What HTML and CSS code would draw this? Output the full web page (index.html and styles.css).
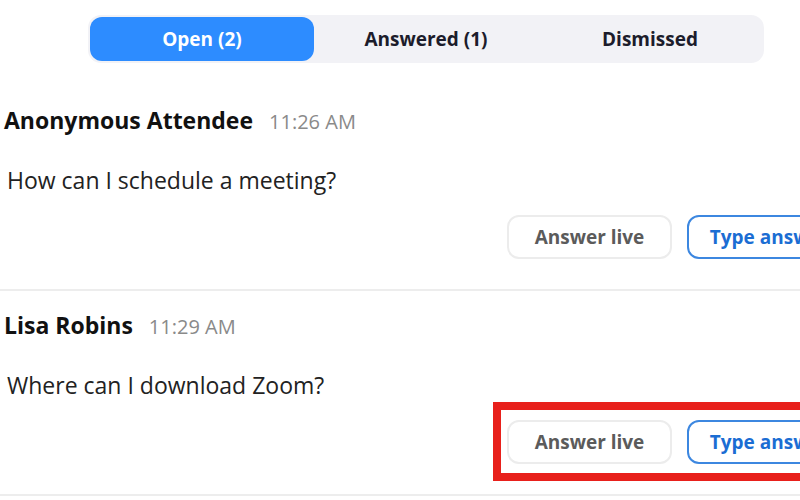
FILE: index.html
```html
<!DOCTYPE html>
<html lang="en">
<head>
    <meta charset="UTF-8">
    <meta name="viewport" content="width=device-width, initial-scale=1.0">
    <title>Q&amp;A</title>
    <link rel="stylesheet" href="styles.css">
</head>
<body>

    <div class="tabs">
        <div class="tab active">Open (2)</div>
        <div class="tab">Answered (1)</div>
        <div class="tab">Dismissed</div>
    </div>

    <div class="questions">
        <div class="question">
            <div class="asker">
                <span class="name">Anonymous Attendee</span>
                <span class="time">11:26 AM</span>
            </div>
            <div class="text">How can I schedule a meeting?</div>
            <div class="actions">
                <button class="btn btn-live">Answer live</button>
                <button class="btn btn-type">Type answer</button>
            </div>
        </div>

        <div class="question">
            <div class="asker">
                <span class="name">Lisa Robins</span>
                <span class="time">11:29 AM</span>
            </div>
            <div class="text">Where can I download Zoom?</div>
            <div class="actions">
                <button class="btn btn-live">Answer live</button>
                <button class="btn btn-type">Type answer</button>
                <!-- highlight drawn over the buttons -->
                <div class="highlight"></div>
            </div>
        </div>
    </div>

</body>
</html>
```

FILE: styles.css
```css
body {
    margin: 0;
    background-color: #fff;
    font-family: "Open Sans", Arial, sans-serif;
    overflow: hidden;
    width: 800px;
    height: 500px;
}
.tabs {
    display: flex;
    width: 672px;
    height: 44px;
    margin: 15px 0 23px 88px;
    padding: 2px;
    background-color: #f2f2f6;
    border-radius: 13px;
}
.tab {
    flex: 1;
    display: flex;
    align-items: center;
    justify-content: center;
    font-size: 19px;
    font-weight: 700;
    color: #1c1c2b;
    border-radius: 12px;
}
.tab.active {
    background-color: #2d8cff;
    color: #fff;
}
.questions {
    width: 870px;
}
.question {
    padding: 19px 0 30px 0;
    border-bottom: 2px solid #ededed;
}
.asker {
    display: flex;
    align-items: baseline;
    height: 30px;
    line-height: 30px;
    padding-left: 4px;
}
.name {
    font-size: 23px;
    font-weight: 700;
    color: #111;
}
.time {
    margin-left: 16px;
    font-size: 20px;
    color: #8a8a8a;
}
.text {
    margin-top: 30px;
    padding-left: 7px;
    font-size: 23px;
    line-height: 30px;
    color: #222;
}
.actions {
    position: relative;
    display: flex;
    gap: 15px;
    margin-top: 20px;
    padding-left: 507px;
}
.btn {
    width: 165px;
    height: 44px;
    font-family: inherit;
    font-size: 19px;
    font-weight: 700;
    background-color: #fff;
    border-radius: 12px;
    cursor: pointer;
}
.btn-live {
    border: 2px solid #ececec;
    color: #5b5b5b;
}
.btn-type {
    border: 2px solid #3c87e0;
    color: #1b6dd3;
}
.highlight {
    position: absolute;
    left: 493px;
    top: -18px;
    width: 400px;
    height: 63px;
    border: 8px solid #e8201b;
}
```
